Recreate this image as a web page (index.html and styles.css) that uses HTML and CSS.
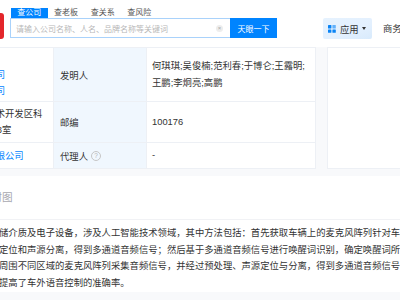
FILE: index.html
```html
<!DOCTYPE html>
<html lang="zh-CN">
<head>
<meta charset="utf-8">
<title>专利详情</title>
<link rel="stylesheet" href="styles.css">
</head>
<body>
<header class="topbar">
  <div class="logo"></div>
  <div class="search">
    <div class="tabs">
      <span class="tab active">查公司</span>
      <span class="tab">查老板</span>
      <span class="tab">查关系</span>
      <span class="tab">查风险</span>
    </div>
    <div class="search-row">
      <div class="input">
        <span class="placeholder">请输入公司名称、人名、品牌名称等关键词</span>
        <span class="clear">×</span>
      </div>
      <button class="go">天眼一下</button>
    </div>
  </div>
  <div class="apps">
    <svg class="apps-icon" width="8" height="8" viewBox="0 0 8 8">
      <rect x="0" y="0" width="3.4" height="3.4" rx="0.5" fill="#0a84f5"/>
      <rect x="4.4" y="0" width="3.4" height="3.4" rx="0.5" fill="#62b1fb"/>
      <rect x="0" y="4.4" width="3.4" height="3.4" rx="0.5" fill="#0a84f5"/>
      <rect x="4.4" y="4.4" width="3.4" height="3.4" rx="0.5" fill="#0a84f5"/>
    </svg>
    <span>应用</span>
    <span class="caret"></span>
  </div>
  <span class="nav-link">商务合作</span>
</header>

<main class="content">
  <div class="row-cards">
    <section class="card info">
      <div class="grid">
        <div class="c c-left link"><div>北京<br>科技有限公司<br>汽车有限公司</div></div>
        <div class="c c-label">发明人</div>
        <div class="c c-value">何琪琪;吴俊楠;范利春;于博仑;王露明;<br>王鹏;李炯亮;高鹏</div>

        <div class="c c-left"><div>北京经济技术开发区科<br>创新街22号8室</div></div>
        <div class="c c-label">邮编</div>
        <div class="c c-value">100176</div>

        <div class="c c-left link"><div>北京汇智有限公司</div></div>
        <div class="c c-label">代理人<span class="help">?</span></div>
        <div class="c c-value">-</div>
      </div>
    </section>
    <aside class="card side"></aside>
  </div>

  <section class="card abstract">
    <h2 class="card-title">摘要附图</h2>
    <p class="abstract-text">储介质及电子设备，涉及人工智能技术领域，其中方法包括：首先获取车辆上的麦克风阵列针对车<br>定位和声源分离，得到多通道音频信号；然后基于多通道音频信号进行唤醒词识别，确定唤醒词所<br>周围不同区域的麦克风阵列采集音频信号，并经过预处理、声源定位与分离，得到多通道音频信号<br>提高了车外语音控制的准确率。</p>
  </section>
</main>
</body>
</html>
```

FILE: styles.css
```css
html, body {
  margin: 0;
  padding: 0;
  overflow: hidden;
}

body {
  width: 400px;
  height: 300px;
  background: #f8f9fb;
  font-family: "Liberation Sans", "Noto Sans CJK SC", sans-serif;
  color: #333;
  font-size: 9.33px;
}

/* ---------- header ---------- */
.topbar {
  display: flex;
  align-items: flex-start;
  height: 47px;
  background: #fff;
}

.logo {
  width: 30px;
  height: 26px;
  margin: 13px 0 0 -26px;
  background: #e3262b;
  border-radius: 3px;
  flex: none;
}

.search {
  margin: 8px 0 0 6px;
  flex: none;
}

.tabs {
  display: flex;
  height: 10px;
  padding-left: 1px;
}

.tab {
  width: 36.67px;
  font-size: 8px;
  line-height: 10px;
  text-align: center;
  color: #555;
}

.tab.active {
  background: #0084ff;
  color: #fff;
}

.search-row {
  display: flex;
  height: 20px;
}

.input {
  width: 220px;
  box-sizing: border-box;
  border: 1px solid #a9d2fb;
  border-right: 0;
  display: flex;
  align-items: center;
  padding-left: 5px;
  font-size: 8px;
  color: #b8b8b8;
}

.placeholder {
  flex: 1;
  white-space: nowrap;
}

.clear {
  width: 7px;
  height: 7px;
  border-radius: 50%;
  background: #ededed;
  color: #a8a8a8;
  font-size: 6px;
  line-height: 7px;
  text-align: center;
  margin-right: 7px;
}

.go {
  width: 47px;
  height: 20px;
  padding: 0;
  border: 0;
  background: #0084ff;
  color: #fff;
  font-family: inherit;
  font-size: 8px;
}

.apps {
  margin: 18px 0 0 46px;
  width: 49px;
  height: 21px;
  box-sizing: border-box;
  padding-left: 5px;
  display: flex;
  align-items: center;
  border-radius: 2px;
  background: linear-gradient(160deg, #e6f2fe 0%, #e3f0fe 60%, #d8eafc 100%);
  flex: none;
}

.apps-icon {
  margin-right: 4px;
}

.caret {
  width: 0;
  height: 0;
  margin-left: 3px;
  border-top: 3px solid #333;
  border-left: 2.5px solid transparent;
  border-right: 2.5px solid transparent;
}

.nav-link {
  margin: 23px 0 0 11px;
  line-height: 12px;
  white-space: nowrap;
}

/* ---------- cards ---------- */
.card {
  background: #fff;
}

.row-cards {
  display: flex;
  gap: 11px;
  margin-left: -63px;
  width: 520px;
}

.info {
  flex: none;
  width: 379px;
  border-top: 1px solid #edf0f5;
}

.side {
  flex: 1;
  border: 1px solid #edf0f5;
  border-bottom-width: 1px;
}

.grid {
  display: grid;
  grid-template-columns: 117px 93px 169px;
  grid-template-rows: 54px 41px 26px;
}

.c {
  box-sizing: border-box;
  border-right: 1px solid #edf0f5;
  border-bottom: 1px solid #edf0f5;
  display: flex;
  align-items: center;
  white-space: nowrap;
}

.c-left {
  padding-left: 12px;
  line-height: 16px;
  overflow: hidden;
}

.link {
  color: #0084ff;
}

.c-label {
  background: #f0f7fe;
  padding-left: 6px;
}

.c-value {
  padding-left: 5px;
  line-height: 17px;
}

.help {
  display: inline-block;
  width: 8px;
  height: 8px;
  margin-left: 3px;
  border: 1px solid #c6c6c6;
  border-radius: 50%;
  color: #b5b5b5;
  font-size: 6.5px;
  line-height: 8px;
  text-align: center;
}

/* ---------- abstract ---------- */
.abstract {
  margin: 7px 0 0 -63px;
  width: 520px;
}

.card-title {
  margin: 0;
  height: 43px;
  line-height: 43px;
  padding-left: 33px;
  border-bottom: 1px solid #f1f2f5;
  font-size: 10.67px;
  font-weight: normal;
  color: #a8a8b0;
  white-space: nowrap;
}

.abstract-text {
  margin: 0;
  padding: 5px 0 0 62px;
  line-height: 16.67px;
  white-space: nowrap;
  color: #333;
}
```
